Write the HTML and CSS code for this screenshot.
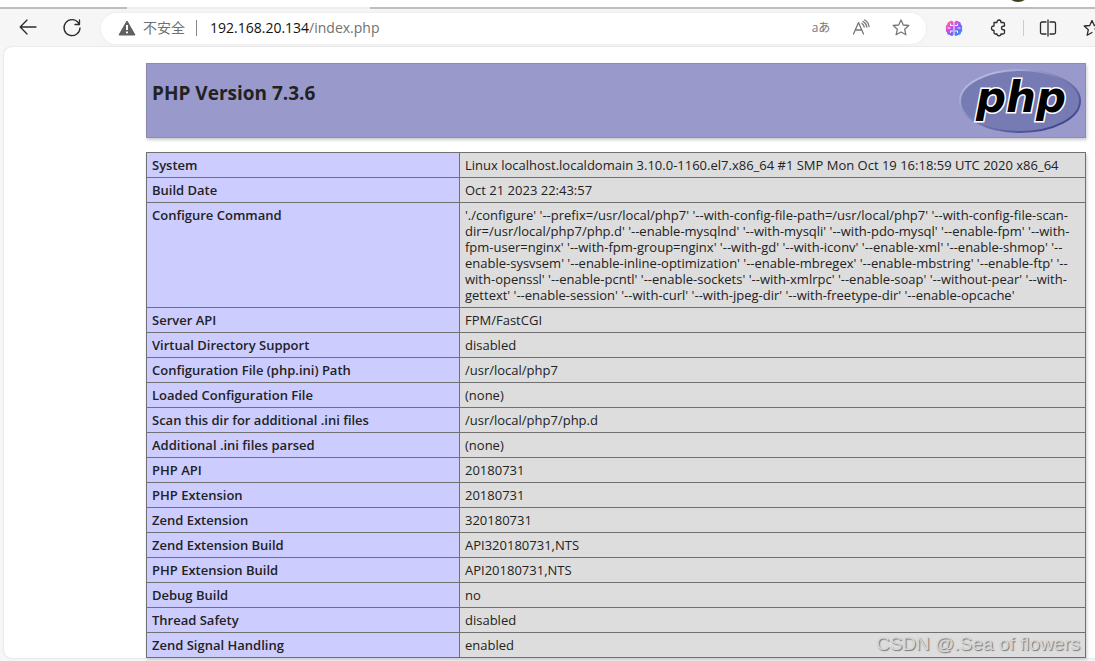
FILE: index.html
```html
<!DOCTYPE html>
<html lang="en">
<head>
<meta charset="utf-8">
<title>phpinfo()</title>
<link rel="stylesheet" href="styles.css">
</head>
<body>
<div class="tabstrip">
  <span class="tab-edge tab-edge-left"></span>
  <span class="tab-edge tab-edge-right"></span>
  <span class="avatar"></span>
</div>
<header class="toolbar">
  <button class="icon-btn" aria-label="Back">
    <svg width="20" height="20" viewBox="0 0 20 20"><path d="M18 9H2.500M9 2L2.200 9L9 16"/></svg>
  </button>
  <button class="icon-btn reload" aria-label="Reload">
    <svg width="20" height="20" viewBox="0 0 20 20"><path d="M16.500 5A8 8 0 1 0 18 10M17.500 2V6.500H13"/></svg>
  </button>
  <div class="address">
    <svg class="warn" width="18" height="16" viewBox="0 0 18 16"><path class="warn-body" d="M9 1L17 15H1Z"/><path class="warn-mark" d="M9 5V10M9 11.500V13.200"/></svg>
    <label class="security" for="url">不安全</label>
    <span class="divider"></span>
    <div class="url" id="url" role="textbox" tabindex="0" aria-label="Address">192.168.20.134<span class="path">/index.php</span></div>
    <button class="icon-btn translate" aria-label="Translate">aあ</button>
    <button class="icon-btn muted read" aria-label="Read aloud">
      <svg width="18" height="18" viewBox="0 0 18 18"><path d="M1.500 15L6.500 3.500L11.500 15M3.200 11H9.800M10 4.500Q12 6 12.200 8M11 2.500Q14.500 4.500 14.800 8M12.500 1Q16.500 3 17 7.500"/></svg>
    </button>
    <button class="icon-btn muted" aria-label="Add to favorites">
      <svg width="18" height="18" viewBox="0 0 18 18"><path d="M9 1L11.300 6L16.800 6.500L12.700 10.300L13.900 15.800L9 13L4.100 15.800L5.300 10.300L1.200 6.500L6.700 6Z"/></svg>
    </button>
  </div>
  <button class="icon-btn brain" aria-label="Assistant">
    <svg width="18" height="17" viewBox="0 0 18 17">
      <defs><linearGradient id="brainfill" x1="0" y1="0" x2="1" y2="1"><stop offset="0" stop-color="#ff8a4a"/><stop offset=".3" stop-color="#e94be0"/><stop offset=".6" stop-color="#7a63f5"/><stop offset="1" stop-color="#22a5ff"/></linearGradient></defs>
      <path class="brain-body" fill="url(#brainfill)" d="M8.500 2Q6.500 0 4.500 1.500Q2 2 2 4.500Q0 6 1 8.500Q0 11 2 12.500Q2 15 5 15Q7 17 8.500 15ZM9.500 2Q11.500 0 13.500 1.500Q16 2 16 4.500Q18 6 17 8.500Q18 11 16 12.500Q16 15 13 15Q11 17 9.500 15Z"/>
      <path class="brain-line" d="M7.500 5.500H5.500V4M3 8H5M7.500 11H5.500V12.500M10.500 5.500H12.500V4M15 8H13M10.500 11H12.500V12.500"/>
    </svg>
  </button>
  <button class="icon-btn" aria-label="Extensions">
    <svg width="18" height="18" viewBox="0 0 18 18"><path d="M4 3.500H7Q7 1 9 1T11 3.500H13Q14.500 3.500 14.500 5V7Q11.500 7 11.500 9T14.500 11V13.500Q14.500 15 13 15H11Q11 16.800 9 16.800T7 15H5.500Q4 15 4 13.500V11.500Q1.500 11.500 1.500 9.200T4 7Z"/></svg>
  </button>
  <span class="divider pale"></span>
  <button class="icon-btn split" aria-label="Split screen">
    <svg width="18" height="18" viewBox="0 0 18 18"><path d="M7 3H3Q1.500 3 1.500 4.500V13.500Q1.500 15 3 15H7M11 3H15Q16.500 3 16.500 4.500V13.500Q16.500 15 15 15H11M9 1V17"/></svg>
  </button>
  <button class="icon-btn collection" aria-label="Favorites">
    <svg width="20" height="18" viewBox="0 0 20 18"><path d="M9 13.500L4.100 16.300L5.300 10.800L1.200 7L6.700 6.500L9 1.500L11.300 6.500H19M12 10H19M13 13.500H19"/></svg>
  </button>
</header>
<main class="page">
  <div class="content">
    <section class="banner">
      <h1>PHP Version 7.3.6</h1>
      <svg class="logo" width="124" height="68" viewBox="0 0 124 68" role="img" aria-label="PHP logo">
        <defs>
          <linearGradient id="rim" x1="0" y1="0" x2="1" y2="1"><stop offset="0.150" stop-color="#b4b8e0"/><stop offset="0.500" stop-color="#777bb3"/><stop offset="0.850" stop-color="#43478c"/></linearGradient>
        </defs>
        <ellipse cx="62" cy="34" rx="60" ry="31" fill="#777bb3" stroke="url(#rim)" stroke-width="2"/>
        <text class="logo-text" x="63" y="45" text-anchor="middle">php</text>
      </svg>
    </section>
    <table class="info">
      <tr><th scope="row">System</th><td>Linux localhost.localdomain 3.10.0-1160.el7.x86_64 #1 SMP Mon Oct 19 16:18:59 UTC 2020 x86_64</td></tr>
      <tr><th scope="row">Build Date</th><td>Oct 21 2023 22:43:57</td></tr>
      <tr><th scope="row">Configure Command</th><td class="command">'./configure' '--prefix=/usr/local/php7' '--with-config-file-path=/usr/local/php7' '--with-config-file-scan-<br>dir=/usr/local/php7/php.d' '--enable-mysqlnd' '--with-mysqli' '--with-pdo-mysql' '--enable-fpm' '--with-<br>fpm-user=nginx' '--with-fpm-group=nginx' '--with-gd' '--with-iconv' '--enable-xml' '--enable-shmop' '--<br>enable-sysvsem' '--enable-inline-optimization' '--enable-mbregex' '--enable-mbstring' '--enable-ftp' '--<br>with-openssl' '--enable-pcntl' '--enable-sockets' '--with-xmlrpc' '--enable-soap' '--without-pear' '--with-<br>gettext' '--enable-session' '--with-curl' '--with-jpeg-dir' '--with-freetype-dir' '--enable-opcache'</td></tr>
      <tr><th scope="row">Server API</th><td>FPM/FastCGI</td></tr>
      <tr><th scope="row">Virtual Directory Support</th><td>disabled</td></tr>
      <tr><th scope="row">Configuration File (php.ini) Path</th><td>/usr/local/php7</td></tr>
      <tr><th scope="row">Loaded Configuration File</th><td>(none)</td></tr>
      <tr><th scope="row">Scan this dir for additional .ini files</th><td>/usr/local/php7/php.d</td></tr>
      <tr><th scope="row">Additional .ini files parsed</th><td>(none)</td></tr>
      <tr><th scope="row">PHP API</th><td>20180731</td></tr>
      <tr><th scope="row">PHP Extension</th><td>20180731</td></tr>
      <tr><th scope="row">Zend Extension</th><td>320180731</td></tr>
      <tr><th scope="row">Zend Extension Build</th><td>API320180731,NTS</td></tr>
      <tr><th scope="row">PHP Extension Build</th><td>API20180731,NTS</td></tr>
      <tr><th scope="row">Debug Build</th><td>no</td></tr>
      <tr><th scope="row">Thread Safety</th><td>disabled</td></tr>
      <tr><th scope="row">Zend Signal Handling</th><td>enabled</td></tr>
    </table>
  </div>
</main>
<div class="watermark">CSDN @.Sea of flowers</div>
</body>
</html>
```
FILE: styles.css
```css
* { box-sizing: border-box; }
body {
  margin: 0;
  min-height: 100vh;
  display: flex;
  flex-direction: column;
  position: relative;
  overflow: hidden;
  background: #f6f6f6;
  color: #222;
  font: 13px/16px "Open Sans", "Noto Sans CJK SC", sans-serif;
}
.tabstrip {
  display: flex;
  position: relative;
  height: 9px;
  overflow: hidden;
  justify-content: space-between;
  background: linear-gradient(#fff 7px, #eee 7px);
}
.tab-edge { border-bottom: 2px solid #bdbdbd; height: 9px; }
.tab-edge-left { width: 127px; }
.tab-edge-right { width: 725px; }
.avatar {
  position: absolute;
  right: 65px;
  top: -22px;
  width: 24px;
  height: 24px;
  border-radius: 50%;
  background: #35421f;
}
.toolbar {
  display: flex;
  align-items: center;
  height: 38px;
  padding: 0 0 0 18px;
}
.icon-btn {
  display: flex;
  flex: none;
  align-items: center;
  justify-content: center;
  width: 20px;
  height: 24px;
  padding: 0;
  border: 0;
  background: none;
  color: #2b2b2b;
  overflow: visible;
}
.icon-btn svg {
  flex: none;
  fill: none;
  stroke: currentColor;
  stroke-width: 1.300;
  stroke-linejoin: round;
  stroke-linecap: round;
}
.reload { margin-left: 24px; }
.address {
  display: flex;
  flex: 1;
  align-items: center;
  height: 31px;
  margin: 0 18px 0 19px;
  padding: 0 15px 0 17px;
  border-radius: 16px;
  background: #fff;
  box-shadow: 0 0 3px #e6e6e6;
  font-size: 14px;
  line-height: 20px;
}
.warn { flex: none; }
.warn-body { fill: #606060; stroke: #606060; stroke-linejoin: round; }
.warn-mark { stroke: #fff; stroke-width: 2; }
.security { margin-left: 7px; color: #707070; }
.divider { flex: none; width: 1px; height: 16px; margin: 0 13px 0 11px; background: #888; }
.pale { margin: 0 14px; background: #ccc; }
.url { flex: 1; color: #111; outline: 0; white-space: nowrap; }
.path { color: #707070; }
.icon-btn.translate {
  color: #777;
  font: 12px/20px "Open Sans", "Noto Sans CJK JP", sans-serif;
  white-space: nowrap;
}
.muted { color: #777; }
.read { margin: 0 20px; }
.brain { margin-right: 25px; }
.split { margin-right: 25px; }
.collection { margin-right: -8px; }
.icon-btn .brain-body { stroke: none; }
.icon-btn .brain-line { fill: none; stroke: #fff; stroke-width: 1; }
.page {
  flex: 1;
  margin: 0 0 3px 4px;
  padding: 16px 9px 0 142px;
  border-radius: 8px 0 0 8px;
  background: #fff;
  box-shadow: 0 0 2px #ccc;
}
.banner {
  display: flex;
  justify-content: space-between;
  align-items: flex-start;
  height: 75px;
  padding: 3px 3px 0 5px;
  border: 1px solid #8c8ca8;
  background: #9999cc;
  box-shadow: 1px 2px 3px #ccc;
}
h1 { margin: 13px 0 0; font-size: 19px; line-height: 26px; font-weight: 700; }
.logo { flex: none; }
.logo-text {
  font: italic bold 42px "DejaVu Sans", sans-serif;
  fill: #000;
  stroke: #fff;
  stroke-width: 3px;
  paint-order: stroke;
}
.info {
  width: 100%;
  margin-top: 14px;
  border-collapse: collapse;
  table-layout: fixed;
  box-shadow: 1px 2px 3px #ccc;
}
.info th, .info td {
  padding: 4px 5px;
  border: 1px solid #707070;
  text-align: left;
  vertical-align: top;
}
.info th { width: 313px; background: #ccccff; font-weight: 600; }
.info td { background: #ddd; }
.command { white-space: nowrap; }
.watermark {
  position: absolute;
  right: 15px;
  bottom: 5px;
  color: #d6d6d6;
  font: 19px/24px "Liberation Sans", sans-serif;
  text-shadow: 1px 1px 1px #777;
}
```
